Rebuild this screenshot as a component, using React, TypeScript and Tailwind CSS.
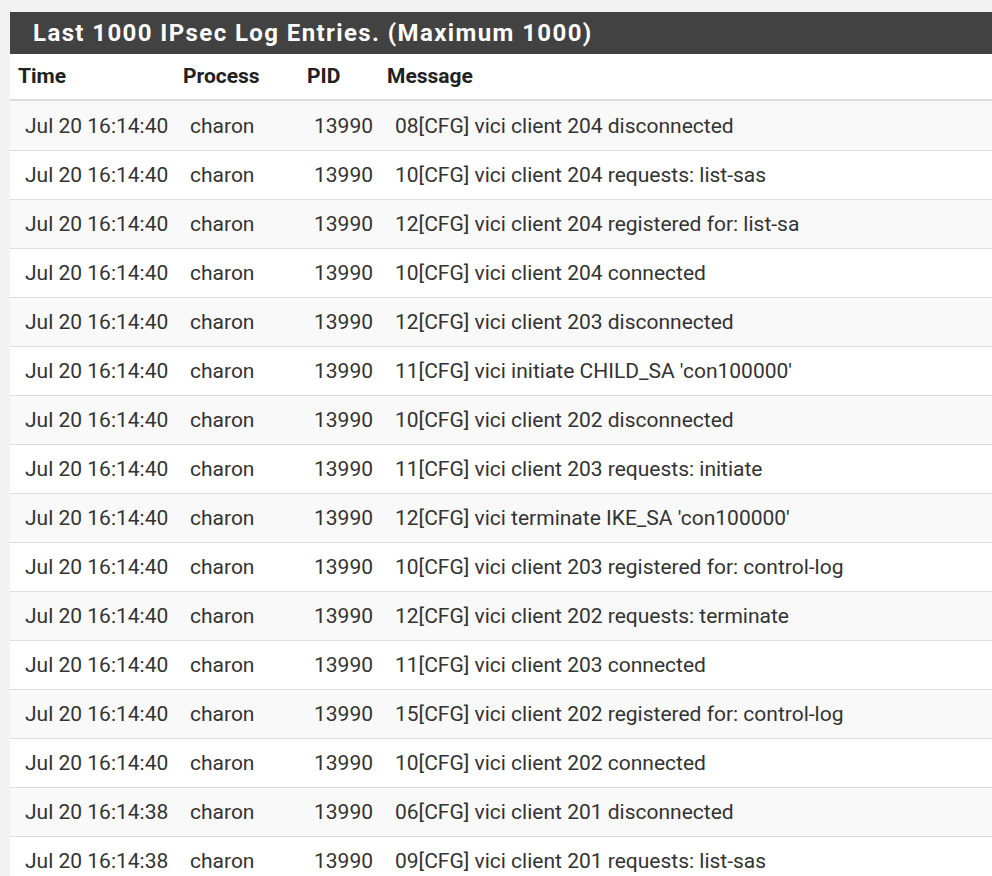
import React from "react";

const rows: [string, string][] = [
  ["Jul 20 16:14:40", "08[CFG] vici client 204 disconnected"],
  ["Jul 20 16:14:40", "10[CFG] vici client 204 requests: list-sas"],
  ["Jul 20 16:14:40", "12[CFG] vici client 204 registered for: list-sa"],
  ["Jul 20 16:14:40", "10[CFG] vici client 204 connected"],
  ["Jul 20 16:14:40", "12[CFG] vici client 203 disconnected"],
  ["Jul 20 16:14:40", "11[CFG] vici initiate CHILD_SA 'con100000'"],
  ["Jul 20 16:14:40", "10[CFG] vici client 202 disconnected"],
  ["Jul 20 16:14:40", "11[CFG] vici client 203 requests: initiate"],
  ["Jul 20 16:14:40", "12[CFG] vici terminate IKE_SA 'con100000'"],
  ["Jul 20 16:14:40", "10[CFG] vici client 203 registered for: control-log"],
  ["Jul 20 16:14:40", "12[CFG] vici client 202 requests: terminate"],
  ["Jul 20 16:14:40", "11[CFG] vici client 203 connected"],
  ["Jul 20 16:14:40", "15[CFG] vici client 202 registered for: control-log"],
  ["Jul 20 16:14:40", "10[CFG] vici client 202 connected"],
  ["Jul 20 16:14:38", "06[CFG] vici client 201 disconnected"],
  ["Jul 20 16:14:38", "09[CFG] vici client 201 requests: list-sas"],
];

export default function App() {
  return (
    <div
      className="w-[992px] h-[876px] overflow-hidden bg-[#f2f2f2] pt-[12px] pl-[10px]"
      style={{ fontFamily: "Roboto, 'Liberation Sans', sans-serif" }}
    >
      <div className="bg-white w-[1000px]">
        <div className="h-[42px] bg-[#424242] text-white font-bold text-[24px] tracking-[1.4px] pl-[23px] flex items-center whitespace-nowrap">
          Last 1000 IPsec Log Entries. (Maximum 1000)
        </div>
        <div className="h-[47px] flex items-center border-b-2 border-[#dddddd] text-[21px] font-bold text-[#212121]">
          <div className="w-[165px] pl-[8px]">Time</div>
          <div className="w-[124px] pl-[8px]">Process</div>
          <div className="w-[80px] pl-[8px]">PID</div>
          <div className="flex-1 pl-[8px]">Message</div>
        </div>
        {rows.map((r, i) => (
          <div
            key={i}
            className={`h-[49px] flex items-center pt-[2px] text-[21px] text-[#333333] ${
              i > 0 ? "border-t border-[#dddddd]" : ""
            } ${i % 2 === 0 ? "bg-[#f9f9f9]" : "bg-white"}`}
          >
            <div className="w-[165px] pl-[15px] whitespace-nowrap">{r[0]}</div>
            <div className="w-[124px] pl-[15px]">charon</div>
            <div className="w-[80px] pl-[15px]">13990</div>
            <div className="flex-1 pl-[16px] whitespace-nowrap">{r[1]}</div>
          </div>
        ))}
      </div>
    </div>
  );
}
